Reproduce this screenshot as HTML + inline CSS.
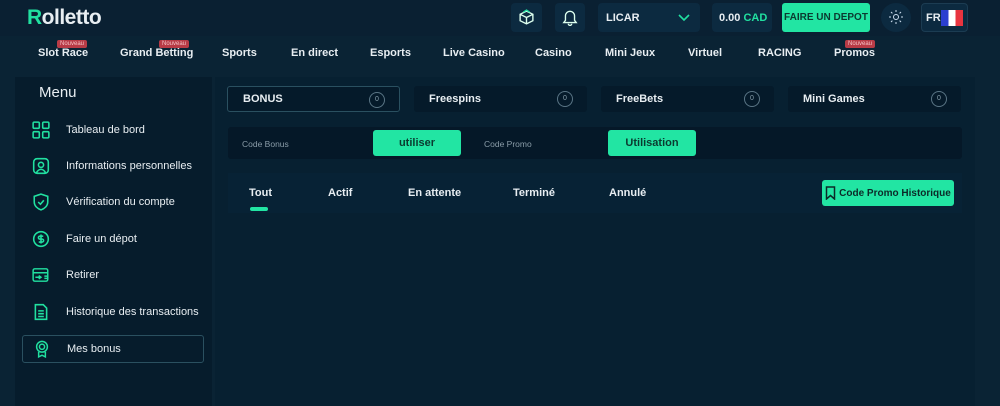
<!DOCTYPE html>
<html><head><meta charset="utf-8"><style>
*{box-sizing:border-box;margin:0;padding:0}
body{width:1000px;height:406px;background:#0a2334;font-family:"Liberation Sans",sans-serif;color:#e8eef2;position:relative;overflow:hidden}
.abs{position:absolute}
.b{font-weight:bold}
.nav{font-size:11px;font-weight:bold;top:47px}
.badge{position:absolute;background:#b83b46;color:#f3c0c4;font-size:6px;padding:1px 3px;border-radius:2px;top:40px}
.hbox{position:absolute;top:3px;height:29px;background:#0c2a40;border-radius:4px}
.side{left:15px;top:77px;width:197px;height:329px;background:#061c2c}
.mi{position:absolute;left:22px;width:182px;height:28px;font-size:11px;display:flex;align-items:center}
.mi svg{position:absolute;left:10px}
.mi span{position:absolute;left:44px}
.main{left:215px;top:77px;width:760px;height:329px;background:#072031}
.tab{position:absolute;top:86px;height:26px;background:#051a2a;border-radius:3px;font-size:11px;font-weight:bold;display:flex;align-items:center;padding-left:15px}
.tab i{position:absolute;right:14px;top:5px;width:16px;height:16px;border:1px solid #5a7585;border-radius:50%;font-style:normal;font-size:7px;color:#8aa0ad;font-weight:normal;text-align:center;line-height:14px}
.gbtn{position:absolute;background:#22e5a3;color:#0b3a30;font-weight:bold;border-radius:3px;display:flex;align-items:center;justify-content:center;white-space:nowrap}
.ft{position:absolute;top:187px;font-size:11px;font-weight:bold}
</style></head><body>
<div class="abs" style="left:0;top:0;width:1000px;height:36px;background:#0a2032"></div>
<div class="abs b" style="left:27px;top:6px;font-size:21px;letter-spacing:-0.5px"><span style="color:#21e0a0">R</span>olletto</div>
<div class="hbox" style="left:511px;width:31px"><svg class="abs" style="left:7px;top:6px" width="17" height="17" viewBox="0 0 16 16" fill="none" stroke="#dfe" stroke-width="1.3"><path d="M8 2l6 3v6l-6 3-6-3V5z M2 5l6 3 6-3 M8 8v6"/><path d="M5 3l3-2 3 2" stroke="#21e0a0"/></svg></div>
<div class="hbox" style="left:555px;width:30px"><svg class="abs" style="left:7px;top:6px" width="16" height="17" viewBox="0 0 14 15" fill="none" stroke="#dfe" stroke-width="1.2"><path d="M3 10V6a4 4 0 018 0v4l1.5 2h-11z M5.5 13a1.5 1.5 0 003 0"/></svg></div>
<div class="hbox" style="left:598px;width:102px"><span class="abs b" style="left:8px;top:9px;font-size:11px">LICAR</span><svg class="abs" style="left:80px;top:11px" width="12" height="8" viewBox="0 0 12 8" fill="none" stroke="#21e0a0" stroke-width="1.6"><path d="M1 1l5 5 5-5"/></svg></div>
<div class="hbox" style="left:712px;width:60px"><span class="abs b" style="left:7px;top:9px;font-size:11px">0.00 <span style="color:#21e0a0">CAD</span></span></div>
<div class="gbtn" style="left:782px;top:3px;width:88px;height:29px;font-size:10px">FAIRE UN DEPOT</div>
<div class="hbox" style="left:881px;width:30px;border-radius:50%"><svg class="abs" style="left:8px;top:7px" width="14" height="14" viewBox="0 0 14 14" fill="none" stroke="#cde" stroke-width="1"><circle cx="7" cy="7" r="2.5"/><path d="M7 0v2M7 12v2M0 7h2M12 7h2M2 2l1.4 1.4M10.6 10.6L12 12M2 12l1.4-1.4M10.6 3.4L12 2"/></svg></div>
<div class="hbox" style="left:921px;width:47px;border:1px solid #1c3c52"><span class="abs b" style="left:4px;top:8px;font-size:11px">FR</span><div class="abs" style="left:19px;top:6px;width:22px;height:16px;background:linear-gradient(90deg,#2b3fd0 33%,#fff 33%,#fff 66%,#e8343f 66%)"></div></div>

<div class="badge" style="left:57px">Nouveau</div><div class="badge" style="left:159px">Nouveau</div><div class="badge" style="left:845px">Nouveau</div>
<div class="abs nav" style="left:38px">Slot Race</div>
<div class="abs nav" style="left:120px">Grand Betting</div>
<div class="abs nav" style="left:222px">Sports</div>
<div class="abs nav" style="left:291px">En direct</div>
<div class="abs nav" style="left:370px">Esports</div>
<div class="abs nav" style="left:443px">Live Casino</div>
<div class="abs nav" style="left:535px">Casino</div>
<div class="abs nav" style="left:605px">Mini Jeux</div>
<div class="abs nav" style="left:688px">Virtuel</div>
<div class="abs nav" style="left:758px">RACING</div>
<div class="abs nav" style="left:834px">Promos</div>

<div class="abs side"></div>
<div class="abs" style="left:39px;top:84px;font-size:15px">Menu</div>
<div class="mi" style="top:116px"><svg width="18" height="18" viewBox="0 0 16 16" fill="none" stroke="#21e0a0" stroke-width="1.4"><rect x="1" y="1" width="5.5" height="5.5" rx="1"/><rect x="9.5" y="1" width="5.5" height="5.5" rx="1"/><rect x="1" y="9.5" width="5.5" height="5.5" rx="1"/><rect x="9.5" y="9.5" width="5.5" height="5.5" rx="1"/></svg><span>Tableau de bord</span></div>
<div class="mi" style="top:152px"><svg width="18" height="18" viewBox="0 0 16 16" fill="none" stroke="#21e0a0" stroke-width="1.4"><rect x="1.5" y="1.5" width="13" height="13" rx="3"/><circle cx="8" cy="7" r="2.3"/><path d="M4 14c1-2 2.5-3 4-3s3 1 4 3"/></svg><span>Informations personnelles</span></div>
<div class="mi" style="top:188px"><svg width="18" height="18" viewBox="0 0 16 16" fill="none" stroke="#21e0a0" stroke-width="1.4"><path d="M8 1l6 2v5c0 3.5-3 6-6 7-3-1-6-3.5-6-7V3z"/><path d="M5.5 8l2 2 3-3.5"/></svg><span>Vérification du compte</span></div>
<div class="mi" style="top:225px"><svg width="18" height="18" viewBox="0 0 16 16" fill="none" stroke="#21e0a0" stroke-width="1.4"><circle cx="8" cy="8" r="6.5"/><path d="M10 5.5H7a1.3 1.3 0 000 2.6h2a1.3 1.3 0 010 2.6H6M8 4v8"/></svg><span>Faire un dépot</span></div>
<div class="mi" style="top:261px"><svg width="18" height="18" viewBox="0 0 16 16" fill="none" stroke="#21e0a0" stroke-width="1.3"><rect x="1" y="2.5" width="13" height="11" rx="1.5"/><path d="M1 6h13M3 10h5M6 8.5L8 10 6 11.5M11 9h3v2h-3"/></svg><span>Retirer</span></div>
<div class="mi" style="top:298px"><svg width="18" height="18" viewBox="0 0 16 16" fill="none" stroke="#21e0a0" stroke-width="1.4"><path d="M3 1.5h7l3 3v10H3z M5.5 7h5M5.5 9.5h5M5.5 12h5"/></svg><span>Historique des transactions</span></div>
<div class="mi" style="top:335px;border:1px solid #2a5060;border-radius:3px"><svg width="18" height="18" viewBox="0 0 16 16" fill="none" stroke="#21e0a0" stroke-width="1.3"><circle cx="8" cy="6" r="4.8"/><circle cx="8" cy="6" r="2.3"/><path d="M5 10.5V15l3-1.5 3 1.5v-4.5"/></svg><span>Mes bonus</span></div>

<div class="abs main"></div>
<div class="tab" style="left:227px;width:173px;border:1px solid #2a5060">BONUS<i>0</i></div>
<div class="tab" style="left:414px;width:173px">Freespins<i>0</i></div>
<div class="tab" style="left:601px;width:173px">FreeBets<i>0</i></div>
<div class="tab" style="left:788px;width:173px">Mini Games<i>0</i></div>
<div class="abs" style="left:228px;top:127px;width:734px;height:32px;background:#051828;border-radius:3px"></div>
<div class="abs" style="left:242px;top:139px;font-size:8.5px;color:#8a9ca8">Code Bonus</div>
<div class="gbtn" style="left:373px;top:130px;width:88px;height:26px;font-size:11px">utiliser</div>
<div class="abs" style="left:484px;top:139px;font-size:8.5px;color:#8a9ca8">Code Promo</div>
<div class="gbtn" style="left:608px;top:130px;width:88px;height:26px;font-size:11px">Utilisation</div>
<div class="abs" style="left:228px;top:173px;width:734px;height:40px;background:#072235"></div>
<div class="ft" style="left:249px">Tout</div>
<div class="abs" style="left:250px;top:207px;width:18px;height:4px;border-radius:2px;background:#22e5a3"></div>
<div class="ft" style="left:328px">Actif</div>
<div class="ft" style="left:408px">En attente</div>
<div class="ft" style="left:513px">Terminé</div>
<div class="ft" style="left:609px">Annulé</div>
<div class="gbtn" style="left:822px;top:180px;width:132px;height:26px;font-size:10px;color:#0c2a28"><svg width="11" height="14" viewBox="0 0 11 14" fill="none" stroke="#0c2a28" stroke-width="1.5" style="margin-right:3px"><path d="M1.5 1h8v12L5.5 9.5 1.5 13z"/></svg>Code Promo Historique</div>
</body></html>
